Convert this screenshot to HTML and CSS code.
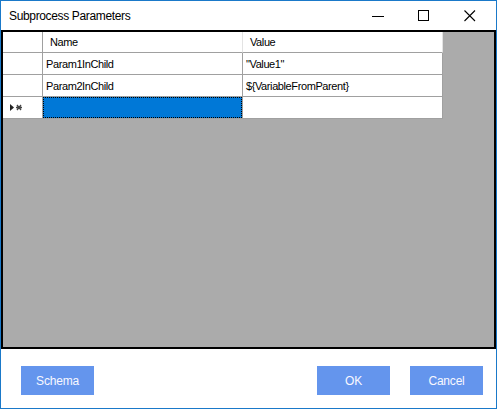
FILE: index.html
```html
<!DOCTYPE html>
<html>
<head>
<meta charset="utf-8">
<link rel="stylesheet" href="styles.css">
</head>
<body>
<div class="window">
  <div class="titlebar">
    <span class="title">Subprocess Parameters</span>
    <div class="controls">
      <span class="ctl"><svg width="46" height="29" viewBox="0 0 46 29"><line x1="17" y1="15.5" x2="29" y2="15.5" stroke="#000" stroke-width="1"/></svg></span>
      <span class="ctl"><svg width="46" height="29" viewBox="0 0 46 29"><rect x="17.5" y="9.5" width="10" height="10" fill="none" stroke="#000" stroke-width="1"/></svg></span>
      <span class="ctl"><svg width="46" height="29" viewBox="0 0 46 29"><path d="M17.5 9.5 L28 20 M28 9.5 L17.5 20" stroke="#000" stroke-width="1.1" fill="none"/></svg></span>
    </div>
  </div>
  <div class="gridarea">
    <div class="grid">
      <div class="cell rh hdr"></div>
      <div class="cell hdr name">Name</div>
      <div class="cell hdr">Value</div>

      <div class="cell rh"></div>
      <div class="cell">Param1InChild</div>
      <div class="cell">"Value1"</div>

      <div class="cell rh"></div>
      <div class="cell">Param2InChild</div>
      <div class="cell">${VariableFromParent}</div>

      <div class="cell rh newrow"><svg width="14" height="8" viewBox="0 0 14 8"><path d="M0 0 L4 3.5 L0 7 Z" fill="#222"/><path d="M7 1 L11 6 M11 1 L7 6 M6 3.5 L12 3.5" stroke="#444" stroke-width="1.3"/></svg></div>
      <div class="cell selected"><div class="focus"></div></div>
      <div class="cell"></div>
    </div>
  </div>
  <div class="footer">
    <button class="btn">Schema</button>
    <div class="spacer"></div>
    <button class="btn">OK</button>
    <button class="btn">Cancel</button>
  </div>
</div>
</body>
</html>
```

FILE: styles.css
```css
html, body {
  margin: 0;
  padding: 0;
  background: #fff;
}
.window {
  width: 497px;
  height: 409px;
  box-sizing: border-box;
  border: 1px solid #1a79c9;
  display: flex;
  flex-direction: column;
  font-family: "Liberation Sans", Arial, sans-serif;
}
.titlebar {
  height: 29px;
  display: flex;
  align-items: center;
  background: #fff;
}
.title {
  font-size: 12px;
  letter-spacing: -0.35px;
  color: #000;
  margin-left: 8px;
  padding-top: 1px;
  flex: 1;
}
.controls {
  display: flex;
  margin-right: 3px;
}
.ctl {
  display: block;
  width: 46px;
  height: 29px;
}
.ctl svg { display: block; }
.gridarea {
  height: 319px;
  box-sizing: border-box;
  border: 2px solid #000;
  background: #ababab;
}
.grid {
  display: grid;
  grid-template-columns: 40px 200px 200px;
  grid-template-rows: 21px 22px 22px 22px;
  width: 440px;
  background: #fff;
}
.cell {
  box-sizing: border-box;
  border-right: 1px solid #a0a0a0;
  border-bottom: 1px solid #a0a0a0;
  font-size: 11px;
  letter-spacing: -0.4px;
  color: #000;
  padding-left: 3px;
  display: flex;
  align-items: center;
  white-space: nowrap;
  position: relative;
}
.cell.hdr {
  padding-left: 7px;
  border-right-color: #e3e3e3;
}
.cell.hdr.rh { border-right-color: #a0a0a0; }
.cell.rh { padding-left: 0; }
.newrow { padding-left: 6px !important; }
.newrow svg { display: block; margin-left: 1px; }
.selected {
  background: #0078d7;
  padding: 0;
}
.focus {
  position: absolute;
  left: 0;
  top: 0;
  right: 0;
  bottom: 0;
  border: 1px dotted #000;
}
.footer {
  height: 59px;
  box-sizing: border-box;
  display: flex;
  align-items: flex-start;
  padding: 17px 13px 0 20px;
  gap: 20px;
}
.spacer { flex: 1; }
.btn {
  width: 73px;
  height: 29px;
  border: none;
  background: #6495ed;
  color: #f8f8ff;
  font-family: "Liberation Sans", Arial, sans-serif;
  font-size: 12px;
  letter-spacing: -0.2px;
  padding: 0;
  margin: 0;
}
```
